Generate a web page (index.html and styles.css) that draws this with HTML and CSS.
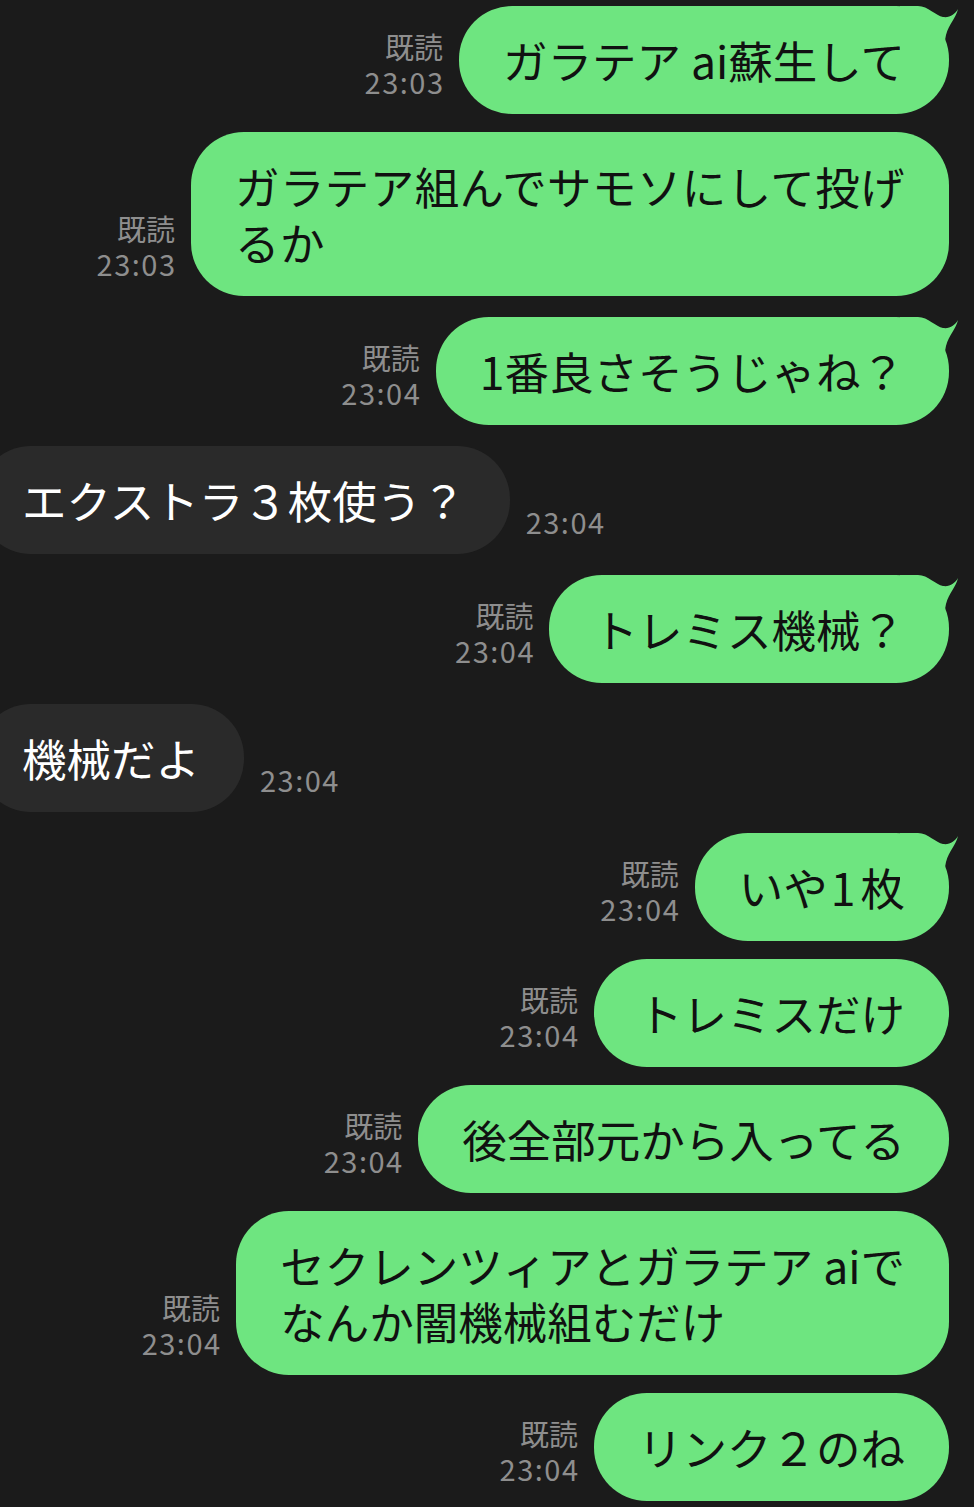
FILE: index.html
```html
<!DOCTYPE html>
<html lang="ja">
<head>
<meta charset="utf-8">
<title>chat</title>
<link rel="stylesheet" href="styles.css">
</head>
<body>
<div class="chat">
  <div class="row out first">
    <div class="meta"><span>既読</span><span class="time">23:03</span></div>
    <div class="bubble">ガラテア ai蘇生して<svg class="tail" viewBox="0 0 60 60" width="60" height="60"><path d="M0 0 H18 C28 0 36 10 43 11 C50 12 55 8 58 3 C56 12 49 18 46 29 L40 60 H0 Z"/></svg></div>
  </div>
  <div class="row out">
    <div class="meta"><span>既読</span><span class="time">23:03</span></div>
    <div class="bubble wide">ガラテア組んでサモソにして投げ<br>るか</div>
  </div>
  <div class="row out first">
    <div class="meta"><span>既読</span><span class="time">23:04</span></div>
    <div class="bubble">1番良さそうじゃね？<svg class="tail" viewBox="0 0 60 60" width="60" height="60"><path d="M0 0 H18 C28 0 36 10 43 11 C50 12 55 8 58 3 C56 12 49 18 46 29 L40 60 H0 Z"/></svg></div>
  </div>
  <div class="row in first">
    <div class="bubble">エクストラ３枚使う？</div>
    <div class="meta"><span class="time">23:04</span></div>
  </div>
  <div class="row out first">
    <div class="meta"><span>既読</span><span class="time">23:04</span></div>
    <div class="bubble">トレミス機械？<svg class="tail" viewBox="0 0 60 60" width="60" height="60"><path d="M0 0 H18 C28 0 36 10 43 11 C50 12 55 8 58 3 C56 12 49 18 46 29 L40 60 H0 Z"/></svg></div>
  </div>
  <div class="row in first">
    <div class="bubble">機械だよ</div>
    <div class="meta"><span class="time">23:04</span></div>
  </div>
  <div class="row out first">
    <div class="meta"><span>既読</span><span class="time">23:04</span></div>
    <div class="bubble">いや<span class="num">1</span>枚<svg class="tail" viewBox="0 0 60 60" width="60" height="60"><path d="M0 0 H18 C28 0 36 10 43 11 C50 12 55 8 58 3 C56 12 49 18 46 29 L40 60 H0 Z"/></svg></div>
  </div>
  <div class="row out">
    <div class="meta"><span>既読</span><span class="time">23:04</span></div>
    <div class="bubble">トレミスだけ</div>
  </div>
  <div class="row out">
    <div class="meta"><span>既読</span><span class="time">23:04</span></div>
    <div class="bubble">後全部元から入ってる</div>
  </div>
  <div class="row out">
    <div class="meta"><span>既読</span><span class="time">23:04</span></div>
    <div class="bubble">セクレンツィアとガラテア aiで<br>なんか闇機械組むだけ</div>
  </div>
  <div class="row out">
    <div class="meta"><span>既読</span><span class="time">23:04</span></div>
    <div class="bubble">リンク２のね</div>
  </div>
</div>
</body>
</html>
```
FILE: styles.css
```css
html, body {
  margin: 0;
  padding: 0;
  background: #1b1b1b;
}
body {
  height: 1507px;
  overflow: hidden;
  font-family: "Noto Sans CJK JP", "Noto Sans", sans-serif;
}
.chat {
  display: flex;
  flex-direction: column;
  padding-top: 6px;
}
.row {
  display: flex;
  align-items: flex-end;
  gap: 16px;
  margin-top: 18px;
}
.row.first {
  margin-top: 21px;
}
.row:first-child {
  margin-top: 0;
}
.row.out {
  justify-content: flex-end;
  padding-right: 25px;
}
.row.in {
  justify-content: flex-start;
  margin-left: -22px;
}
.bubble {
  position: relative;
  white-space: nowrap;
  font-size: 44.5px;
  line-height: 56px;
  padding: 26px 44px;
  border-radius: 53px;
}
.bubble.wide {
  letter-spacing: 0.4px;
}
.num {
  margin: 0 5px 0 3px;
}
.out .bubble {
  background: #6ee580;
  color: #111;
}
.in .bubble {
  background: #2a2a2a;
  color: #fff;
}
.tail {
  position: absolute;
  top: 0;
  right: -11px;
  overflow: visible;
}
.tail path {
  fill: #6ee580;
}
.meta {
  display: flex;
  flex-direction: column;
  font-size: 29px;
  line-height: 35px;
  color: #8e8e8e;
  padding-bottom: 15px;
}
.out .meta {
  align-items: flex-end;
}
.in .meta {
  align-items: flex-start;
}
.time {
  letter-spacing: 1.5px;
}
.out .time {
  margin-right: -1.5px;
}
```
